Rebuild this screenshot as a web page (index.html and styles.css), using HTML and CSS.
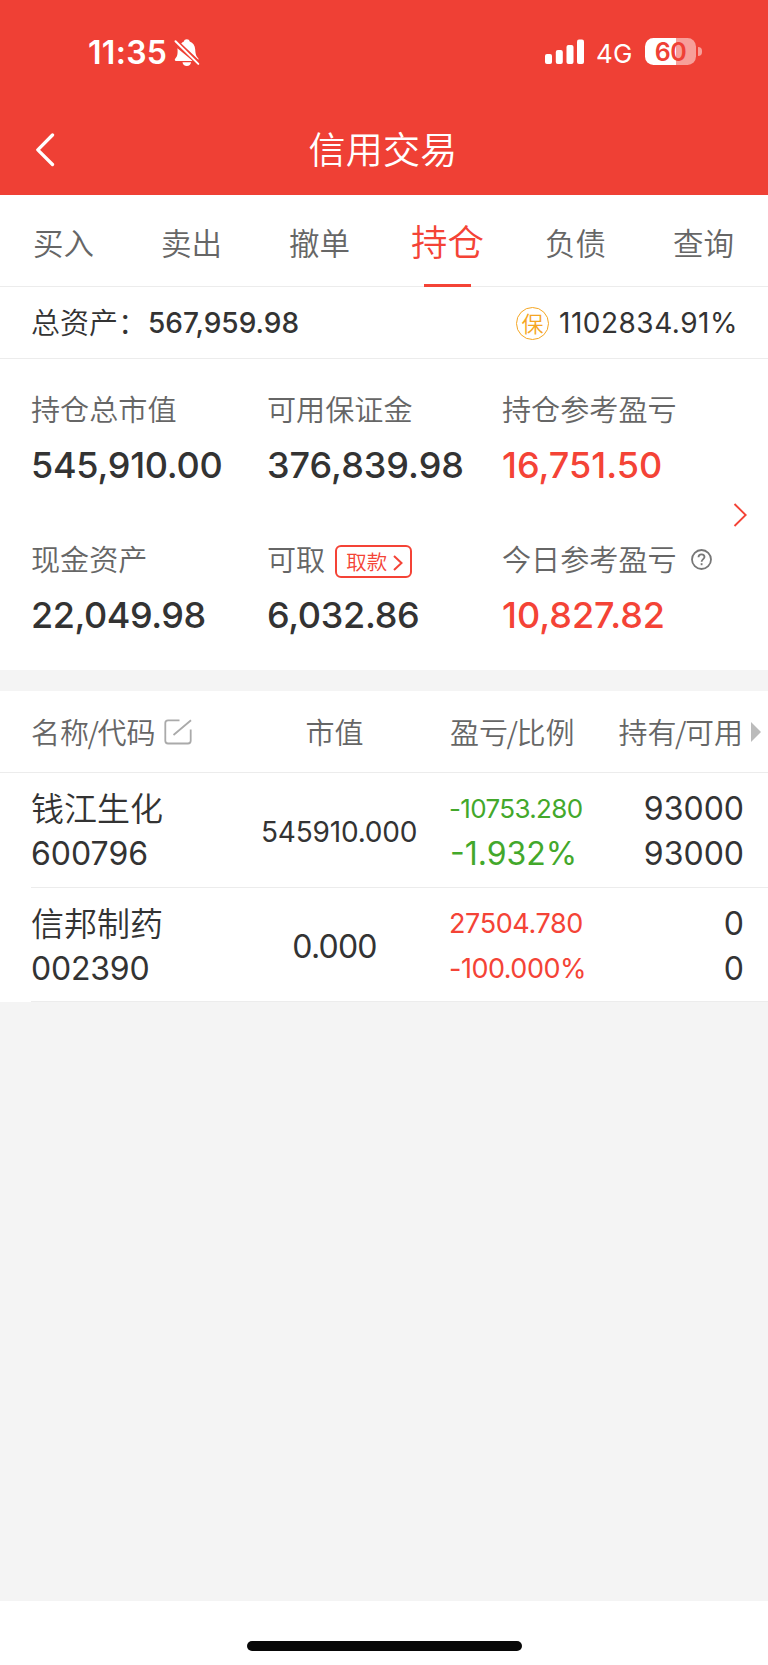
FILE: index.html
```html
<!DOCTYPE html>
<html lang="zh-CN">
<head>
<meta charset="utf-8">
<title>信用交易</title>
<link rel="stylesheet" href="styles.css">
</head>
<body>
<header class="top">
  <div class="status">
    <span class="time">11:35</span>
    <svg class="bell" width="26" height="28" viewBox="0 0 26 28">
      <path fill="#fff" d="M3.4 9.2 18.9 22H2.2C.6 22 .3 20.4 1.5 19.300C3.400 17.400 3.600 15 3.600 11.500Z"/>
      <path fill="#fff" d="M7.200 4.500C8 3.500 9 2.900 9.900 2.500C10.200.9 11.200.2 12.800.2S15.400.9 15.700 2.500C19.200 3.700 21 6.500 21.200 10.500C21.400 14 21.700 16.500 23.500 18.500C24.600 19.600 24.700 20 24.400 20.800Z"/>
      <path fill="#fff" d="M8.500 23.300H17C16.800 25.700 15.300 27 12.800 27S8.800 25.700 8.500 23.300Z"/>
      <path stroke="#ef4035" stroke-width="4.200" d="M1 1.800 25 25.200"/>
      <path stroke="#fff" stroke-width="2" stroke-linecap="round" d="M1.500 2.300 24.300 24.900"/>
    </svg>
    <svg class="signal" width="39" height="25" viewBox="0 0 39 25" fill="#fff">
      <rect x="0" y="15" width="7" height="10" rx="2"/>
      <rect x="10.800" y="11" width="7" height="14" rx="2"/>
      <rect x="21.500" y="6" width="7" height="19" rx="2"/>
      <rect x="32" y="0.500" width="7" height="24.500" rx="2"/>
    </svg>
    <span class="network">4G</span>
    <span class="battery"><span class="level">60</span></span>
    <span class="nub"></span>
  </div>
  <div class="titlebar">
    <svg class="back" width="20" height="36" viewBox="0 0 20 36" fill="none" stroke="#fff" stroke-width="3.300" stroke-linecap="round" stroke-linejoin="round"><path d="M16.500 3 1.800 17.800 16.500 32.500"/></svg>
    <h1>信用交易</h1>
  </div>
</header>
<nav class="tabs">
  <a>买入</a><a>卖出</a><a>撤单</a><a class="active">持仓</a><a>负债</a><a>查询</a>
</nav>
<section class="summary">
  <span class="cn">总资产：</span><b class="total">567,959.98</b>
  <span class="badge">保</span><span class="ratio">1102834.91%</span>
</section>
<section class="metrics">
  <div class="grid">
    <div><div class="label">持仓总市值</div><div class="val v1">545,910.00</div></div>
    <div><div class="label">可用保证金</div><div class="val">376,839.98</div></div>
    <div><div class="label">持仓参考盈亏</div><div class="val red">16,751.50</div></div>
    <div><div class="label">现金资产</div><div class="val v2">22,049.98</div></div>
    <div><div class="label">可取<span class="withdraw">取款<svg width="10" height="16" viewBox="0 0 10 16" fill="none" stroke="#f44336" stroke-width="2"><path d="M1 .900 8.500 8 1 15.100"/></svg></span></div><div class="val v3">6,032.86</div></div>
    <div><div class="label">今日参考盈亏<svg class="help" width="21" height="21" viewBox="0 0 21 21" fill="none" stroke="#777" stroke-width="1.800"><circle cx="10.500" cy="10.500" r="9.500"/><path d="M7.500 8.300C7.500 6.500 8.800 5.400 10.500 5.400S13.500 6.500 13.500 8.100C13.500 10 10.600 10.300 10.600 12.800"/><path d="M10.600 14.200V16.200"/></svg></div><div class="val red">10,827.82</div></div>
  </div>
  <svg class="more" width="14" height="24" viewBox="0 0 14 24" fill="none" stroke="#f44336" stroke-width="1.900"><path d="M1.500 1 12.700 12 1.500 23"/></svg>
</section>
<section class="holdings">
  <div class="row head">
    <div>名称<i>/</i>代码<svg class="edit" width="28" height="26" viewBox="0 0 28 26" fill="none" stroke="#aaa" stroke-width="1.800"><path d="M15.500 1.300H4Q1.300 1.300 1.300 4V21.800Q1.300 24.500 4 24.500H24Q26.700 24.500 26.700 21.800V10.500M9.500 16 27 1.300"/></svg></div>
    <div class="mid">市值</div>
    <div>盈亏<i>/</i>比例</div>
    <div class="end">持有<i>/</i>可用</div>
    <span class="tri"></span>
  </div>
  <div class="row item">
    <div><div class="name">钱江生化</div><div class="num">600796</div></div>
    <div class="value small">545910.000</div>
    <div class="green"><div class="pl first">-10753.280</div><div class="num pct">-1.932%</div></div>
    <div class="end"><div class="num">93000</div><div class="num">93000</div></div>
  </div>
  <div class="row item">
    <div><div class="name">信邦制药</div><div class="num code2">002390</div></div>
    <div class="value mid zero">0.000</div>
    <div class="red"><div class="pl">27504.780</div><div class="pl neg">-100.000%</div></div>
    <div class="end"><div class="num">0</div><div class="num">0</div></div>
  </div>
</section>
<main class="blank"></main>
<footer class="home"><span></span></footer>
</body>
</html>
```
FILE: styles.css
```css
* { box-sizing: border-box; }
body {
  margin: 0;
  width: 768px;
  height: 1665px;
  display: flex;
  flex-direction: column;
  background: #fff;
  color: #333;
  font-family: "Noto Sans CJK SC", "Noto Sans", sans-serif;
  font-weight: 350;
}
svg { display: block; flex: none; }
.red { color: #f44336; }
.green { color: #43a82b; }

.top { height: 195px; background: #ef4035; color: #fff; }
.status { height: 104px; display: flex; align-items: flex-start; padding-left: 88px; font-family: Inter, sans-serif; }
.time { width: 86px; margin-top: 33px; font-size: 32px; line-height: 40px; font-weight: 600; letter-spacing: .3px; }
.bell { margin-top: 39px; }
.signal { margin: 39px 0 0 345px; }
.network { width: 49px; margin: 34px 0 0 12px; font-size: 26px; line-height: 40px; font-weight: 400; letter-spacing: .3px; }
.battery {
  width: 51px; height: 27px; margin-top: 38px; border-radius: 8.5px;
  background: linear-gradient(90deg, #fff 31px, #f79f99 31px);
  display: flex; justify-content: center;
}
.level { color: #ef4035; font-size: 25px; line-height: 29px; font-weight: 600; letter-spacing: -.5px; }
.nub { width: 3.5px; height: 9px; margin: 47px 0 0 2px; border-radius: 0 4px 4px 0; background: #f79f99; }

.titlebar { height: 91px; display: flex; align-items: center; padding: 0 36px; }
.titlebar h1 { flex: 1; margin: 0 22px 3px 0; text-align: center; font-size: 37px; line-height: 50px; font-weight: 350; letter-spacing: .3px; }

.tabs { height: 92px; display: grid; grid-template-columns: repeat(6, 128px); border-bottom: 1px solid #ececec; color: #666; font-size: 30.5px; }
.tabs a { position: relative; line-height: 91px; padding: 2px 1px 0 0; height: 91px; text-align: center; }
.tabs .active { color: #f44336; font-size: 36.5px; padding-top: 1px; line-height: 89px; }
.tabs .active::after { content: ""; position: absolute; left: 40px; bottom: -1px; width: 47px; height: 3px; background: #f44336; }

.summary { height: 72px; display: flex; align-items: center; padding-left: 31px; border-bottom: 1px solid #ececec; }
.cn { width: 117px; font-size: 29px; line-height: 40px; margin-bottom: 3px; white-space: nowrap; }
.total { width: 368px; font: 500 28px/40px Inter, sans-serif; }
.badge { width: 33px; height: 33px; border: 1.500px solid #f5a623; border-radius: 50%; color: #f5a623; font-size: 22px; line-height: 28px; text-align: center; margin-top: 1px; }
.ratio { margin-left: 10px; font: 400 28px/40px Inter, sans-serif; letter-spacing: .5px; }

.metrics { height: 311px; display: flex; align-items: center; padding-left: 31px; }
.grid { width: 702px; height: 311px; padding-top: 34px; display: grid; grid-template-columns: 236px 235px 1fr; grid-template-rows: 150px 150px; }
.label { display: flex; align-items: center; height: 30px; line-height: 30px; font-size: 29.1px; letter-spacing: 0; color: #666; white-space: nowrap; }
.val { margin-top: 22px; font: 500 36px/40px Inter, sans-serif; }
.v1 { letter-spacing: -.27px; }
.v2 { letter-spacing: -.46px; }
.v3 { letter-spacing: -.31px; }
.withdraw { display: flex; align-items: center; width: 77px; height: 33px; margin: 6px 0 0 10px; padding: 0 8px 0 9px; border: 2px solid #f44336; border-radius: 6px; color: #f44336; font-size: 20.500px; line-height: 28px; }
.withdraw svg { margin: 4px 0 0 6px; }
.help { margin: 3px 0 0 14px; }

.holdings { border-top: 21px solid #f4f4f4; }
.row { display: grid; grid-template-columns: 231px 145px 43px 153px 141px; }
.row > :nth-child(1) { grid-column: 1; }
.row > :nth-child(2) { grid-column: 2; }
.row > :nth-child(3) { grid-column: 4; }
.row > :nth-child(4) { grid-column: 5; }
.head { position: relative; height: 82px; padding-left: 31px; border-bottom: 1px solid #ececec; color: #666; font-size: 29px; line-height: 80px; }
.head > div { display: flex; white-space: nowrap; }
.head > .mid { justify-content: center; }
.head > .end { justify-content: flex-end; padding-right: 1px; }
.head i { font-style: normal; margin: 0 -1.500px; }
.edit { margin: 28px 0 0 9px; }
.tri { position: absolute; left: 751px; top: 31px; border-left: 10px solid #bbb; border-top: 10px solid transparent; border-bottom: 10px solid transparent; }
.item { height: 115px; margin-left: 31px; padding-top: 13px; border-bottom: 1px solid #ececec; }
.item:last-child { height: 114px; }
.name { height: 45px; line-height: 43px; font-size: 33px; }
.num { font: 400 32px/46px Inter, sans-serif; height: 45px; }
.code2 { letter-spacing: -.2px; }
.item .value { font: 400 32px/92px Inter, sans-serif; height: 90px; }
.item .small { margin-left: -1px; font-size: 28px; letter-spacing: -.2px; }
.mid { text-align: center; }
.zero { letter-spacing: -.79px; }
.pl { font: 400 27px/45px Inter, sans-serif; letter-spacing: -.4px; margin-left: -1px; }
.first { font-size: 26px; letter-spacing: -.66px; }
.neg { letter-spacing: -.5px; }
.end { text-align: right; }

.blank { flex: 1; background: #f4f4f4; }
.home { height: 64px; padding: 40px 0 0 247px; background: #fff; }
.home span { display: block; width: 275px; height: 10px; border-radius: 5px; background: #080808; }
```
